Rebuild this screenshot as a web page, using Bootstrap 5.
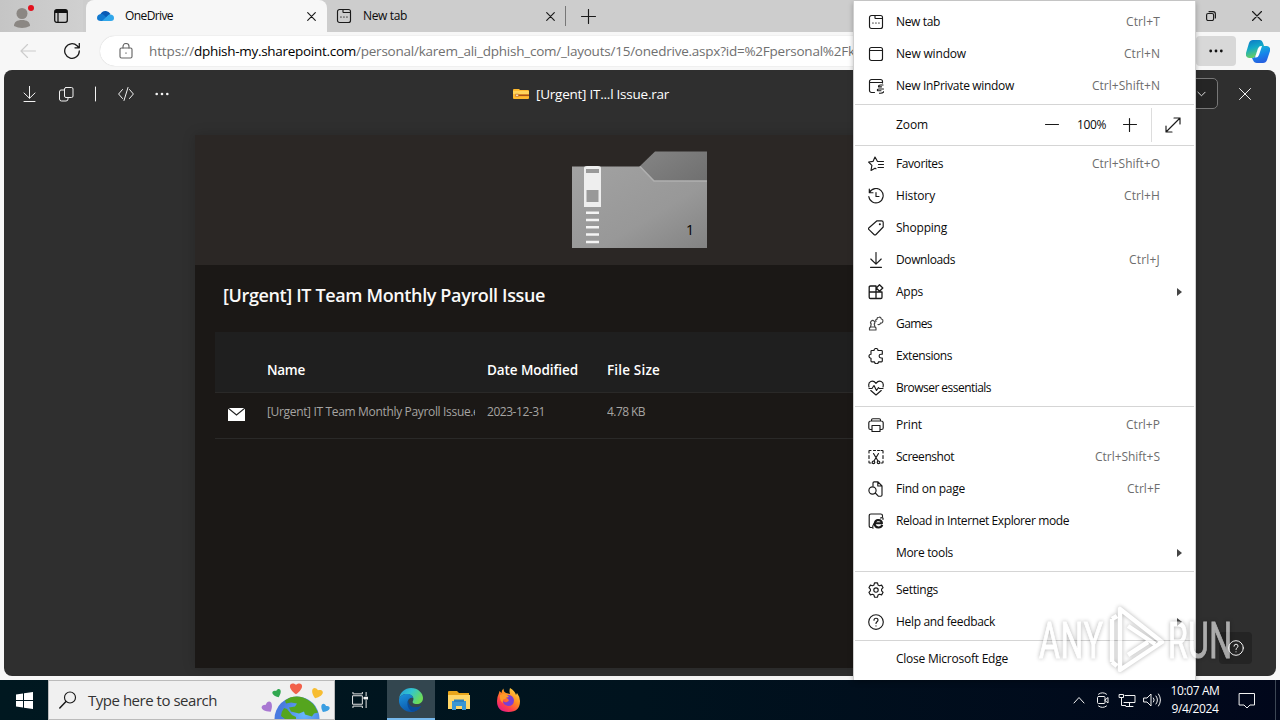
<!DOCTYPE html>
<html lang="en">
<head>
    <meta charset="UTF-8">
    <meta name="viewport" content="width=device-width, initial-scale=1.0">
    <title>OneDrive</title>
    <link href="https://cdn.jsdelivr.net/npm/bootstrap@5.3.0/dist/css/bootstrap.min.css" rel="stylesheet">
    <style>
        body {
            width: 1280px;
            height: 720px;
            font-family: "Open Sans", "Noto Sans", sans-serif;
            font-size: 12px;
            line-height: 16px;
            color: #0a0a0a;
            background: #f7f7f7;
        }
        svg { flex: none; display: block; }
        .ico { width: 16px; height: 16px; fill: none; stroke: #1a1a1a; stroke-width: 1.15; stroke-linecap: round; stroke-linejoin: round; }
        .ico.light { stroke: #f2f2f2; stroke-width: 1; }
        .fit { white-space: nowrap; }

        /* icon sizes and gaps */
        .x-tab { width: 9px; height: 9px; }
        .x-win { width: 10px; height: 10px; margin-right: 18px; }
        .restore { width: 10px; height: 10px; margin-right: 36px; }
        .plus { width: 15px; height: 15px; }
        .back { stroke: #ccc; margin-left: 20px; }
        .reload { margin-left: 28px; }
        .lock { stroke: #666; margin-right: 15px; }

        /* browser chrome */
        .tab-strip { height: 32px; background: #cdcdcd; }
        .profile { width: 83px; padding-left: 10px; background: linear-gradient(90deg, #c5c5c5, #d0d0d0); }
        .tab { height: 32px; padding: 0 11px 0 11px; }
        .tab.current { width: 241px; margin-left: 3px; background: #f7f7f7; border-radius: 8px 8px 0 0; }
        .tab.other { width: 238px; padding-left: 9px; padding-right: 10px; }
        .tab-label { margin-left: 11px; }
        .tab-divider { width: 1px; height: 20px; background: #777; }
        .plus { margin-left: 15px; }
        .toolbar { height: 38px; }
        .address { height: 30px; border-radius: 15px; margin-left: 20px; width: 1080px; background: #fff; box-shadow: 0 0 1px #bbb; font-size: 13.5px; color: #707070; padding-left: 18px; }
        .more-btn { width: 40px; height: 30px; background: #d8d8d8; border-radius: 4px; left: 1196px; }
        .copilot { margin-right: 10px; }

        /* viewer */
        .viewer { height: 606px; margin: 0 4px 4px; background: #2f2f2f; border-radius: 8px; }
        .command-bar { height: 47px; color: #fff; font-size: 13.5px; }
        .commands { width: 509px; padding-left: 17px; gap: 21px; }
        .commands .bar { width: 2px; }
        .doc-name { margin-left: 7px; }
        .split-btn { width: 60px; height: 31px; border: 1px solid #777; border-radius: 5px; background: #252525; padding-right: 11px; margin-right: 21px; }
        .chev { width: 9px; height: 6px; }
        .close-doc { width: 12px; height: 12px; margin-right: 25px; }
        .sheet { width: 890px; height: 533px; margin: 18px 0 0 191px; background: #1b1816; color: #fff; box-shadow: 0 0 12px rgba(0,0,0,.18); }
        .sheet-top { height: 130px; background: #2b2725; padding: 16px 0 0 377px; }
        .sheet-title { font-size: 18px; font-weight: 600; line-height: 24px; padding: 18px 0 0 28px; height: 67px; color: #faf9f8; }
        .files { margin: 0 20px; display: grid; grid-template-columns: 52px 208px 12px 120px 1fr; }
        .files > div { border-bottom: 1px solid #2a2928; }
        .files .th { height: 61px; padding-top: 30px; background: #1f1f1f; font-size: 13.5px; font-weight: 600; }
        .files .td { height: 46px; padding-top: 11px; color: #a6a4a2; overflow: hidden; }
        .mail { margin: 4px 0 0 13px; }
        .folder { width: 135px; height: 98px; }

        /* app menu */
        .app-menu { position: absolute; left: 853px; top: 1px; width: 343px; height: 679px; padding-top: 5px; background: #fff; border: 1px solid #cfcfcf; border-width: 0 1px; box-shadow: 0 2px 5px rgba(0,0,0,.25); }
        .entry { height: 32px; padding: 0 35px 0 14px; position: relative; }
        .entry .ico { margin-right: 12px; }
        .entry .keys { color: #6d6d6d; margin-left: auto; }
        .entry .arrow { position: absolute; right: 13px; border: 4px solid transparent; border-left: 5px solid #444; border-right: 0; }
        .sep { height: 5px; padding: 2px 1px; }
        .sep::before { content: ""; display: block; height: 1px; background: #d5d5d5; }
        .zoom-row { height: 36px; padding-left: 42px; }
        .zoom-row .step { width: 14px; }
        .zoom-row .minus { margin: 0 18px 0 117px; }
        .zoom-row .add { margin: 0 14px 0 17px; }
        .zoom-row .full { height: 34px; border-left: 1px solid #ddd; padding-left: 13px; }

        .help-btn { position: absolute; left: 1219px; top: 632px; width: 33px; height: 32px; background: #242424; border-radius: 4px; }
        .watermark { position: absolute; left: 1039px; top: 605px; width: 196px; height: 72px; opacity: .6; filter: drop-shadow(0 0 2px rgba(0,0,0,.5)); }
        .watermark text { font: 400 50px Roboto, sans-serif; fill: #fff; stroke: #fff; }

        /* taskbar */
        .taskbar { height: 40px; background: linear-gradient(90deg, #001820, #00131e 50%, #01071b); color: #fff; }
        .search { width: 287px; height: 40px; background: #f0f0f0; border: 1px solid #bbb; color: #333; font-size: 15px; padding: 0 1px 0 10px; }
        .glass { width: 18px; height: 18px; margin-right: 11px; }
        .task { width: 48px; height: 40px; }
        .task.first { width: 52px; padding-right: 3px; }
        .task.last { width: 50px; }
        .task.open { background: #33464f; border-bottom: 2px solid #76b9ed; padding-top: 2px; }
        .tray { gap: 7px; }
        .tray .up { width: 12px; height: 8px; margin-right: 3px; }
        .tray .wide { width: 18px; }
        .clock { width: 60px; line-height: 18px; font-size: 12px; margin-left: -3px; }
        .note { width: 18px; height: 17px; margin: 0 12px 0 6px; }
        .peek { width: 5px; height: 40px; border-left: 1px solid #3c4654; }
    </style>
</head>
<body class="overflow-hidden position-relative">
    <div class="tab-strip d-flex align-items-center">
        <div class="profile d-flex align-items-center h-100">
            <svg width="28" height="28" viewBox="0 0 28 28">
                <circle cx="12" cy="11.5" r="5.5" fill="#8b8783"/>
                <path d="M4 24c0-4 3-6 8-6s8 2 8 6q-8 4-16 0" fill="#8b8783"/>
                <circle cx="21" cy="6" r="3" fill="#e3101d"/>
            </svg>
            <svg class="ms-3" width="14" height="14" viewBox="0 0 14 14" fill="none" stroke="#111" stroke-width="1.3"><rect x=".7" y=".7" width="12.6" height="12.6" rx="2"/><path d="M1 2.500h12" stroke-width="3"/><path d="M4 2v11"/></svg>
        </div>
        <div class="tab current d-flex align-items-center">
            <svg width="17" height="12" viewBox="0 0 17 12">
                <path d="M3 5Q5 .5 9 1q3 .5 4.500 3L9 8H1z" fill="#0a5bb5"/>
                <path d="M0 8q0-4 5-4 2 0 7 7H4Q0 11 0 8" fill="#1279cf"/>
                <path d="M5 11l7-6.500Q17 4 17 8q0 3-3 3z" fill="#31a7ea"/>
            </svg>
            <span class="fit tab-label" data-w="48">OneDrive</span>
            <svg class="ico x-tab ms-auto" viewBox="0 0 9 9"><path d="M.7.7l7.600 7.600M8.300.7L.7 8.300"/></svg>
        </div>
        <div class="tab other d-flex align-items-center">
            <svg class="ico"><use href="#i-tab"/></svg>
            <span class="fit tab-label" data-w="44">New tab</span>
            <svg class="ico x-tab ms-auto" viewBox="0 0 9 9"><path d="M.7.7l7.600 7.600M8.300.7L.7 8.300"/></svg>
        </div>
        <div class="tab-divider"></div>
        <svg class="ico plus" viewBox="0 0 15 15"><path d="M7.500.5v14M.5 7.500h14"/></svg>
        <svg class="ico restore ms-auto" viewBox="0 0 10 10"><rect x=".6" y="2.500" width="7" height="7" rx="1.500"/><path d="M3 .6h4q2.400 0 2.400 2.400v4"/></svg>
        <svg class="ico x-win" viewBox="0 0 10 10"><path d="M.5.5l9 9M9.500.5l-9 9"/></svg>
    </div>

    <div class="toolbar d-flex align-items-center">
        <svg class="ico back" viewBox="0 0 16 16"><path d="M15.500 8H1M7.500 1.500L1 8l6.500 6.500"/></svg>
        <svg class="ico reload" viewBox="0 0 16 16"><path d="M15.300 8a7.300 7.300 0 1 1-2.200-5.200L15 4.700M15.300.5v4.300h-4.300" stroke-width="1.300"/></svg>
        <div class="address d-flex align-items-center overflow-hidden">
            <svg class="ico lock" viewBox="0 0 16 16"><rect x="2" y="5" width="12" height="10" rx="1.500"/><path d="M5 5V3.500a3 3 0 0 1 6 0V5M8 9.800v.5"/></svg>
            <span class="fit" data-w="45">https://</span><span class="fit text-black" data-w="162">dphish-my.sharepoint.com</span><span class="fit" data-w="492">/personal/karem_ali_dphish_com/_layouts/15/onedrive.aspx?id=%2Fpersonal%2F</span><span class="fit">karem</span>
        </div>
        <div class="more-btn position-absolute d-flex align-items-center justify-content-center">
            <svg width="14" height="4" viewBox="0 0 14 4" fill="#111"><circle cx="1.700" cy="2" r="1.400"/><circle cx="7" cy="2" r="1.400"/><circle cx="12.300" cy="2" r="1.400"/></svg>
        </div>
        <svg class="copilot ms-auto" width="24" height="23" viewBox="0 0 24 23">
            <defs>
                <linearGradient id="cpA" x2="0.300" y2="1"><stop stop-color="#0c74c6"/><stop offset=".5" stop-color="#12a9c8"/><stop offset="1" stop-color="#69cf62"/></linearGradient>
                <linearGradient id="cpB" x2="0.300" y2="1"><stop stop-color="#19bfd0"/><stop offset=".6" stop-color="#1684ea"/><stop offset="1" stop-color="#2562e0"/></linearGradient>
            </defs>
            <path d="M7 0h7q2 0 3 3l1 3h-3q-2 0-3 3l-2 6q-1 3-3 3H3q-4-1-3-5L3 3q1-3 4-3" fill="url(#cpA)"/>
            <path d="M18 6h3q4 1 3 5l-3 9q-1 3-4 3h-6q-3 0-4-3l-1-2q3 0 4-3l2-6q1-3 3-3z" fill="url(#cpB)"/>
            <path d="M12 8.500q1-2.500 3-2.500h1l-3 9q-1 2.500-3 2.500H9z" fill="#fff"/>
        </svg>
    </div>

    <div class="viewer">
        <div class="command-bar d-flex align-items-center">
            <div class="commands d-flex align-items-center">
                <svg class="ico light" viewBox="0 0 16 16"><path d="M8.500 0v12M3 7l5.500 5.300L14 7M3 15.500h11"/></svg>
                <svg class="ico light" viewBox="0 0 16 16"><rect x="6.500" y="1.500" width="8.500" height="10" rx="1.500"/><path d="M6 4H3Q1.500 4 1.500 6v7q0 2 2 2H8q2 0 2-2v-1.500"/></svg>
                <svg class="ico light bar" viewBox="0 0 2 16"><path d="M.5 1v14"/></svg>
                <svg class="ico light" viewBox="0 0 16 16"><path d="M4.500 3.500L.6 8l3.900 4.500M11.500 3.500L15.400 8l-3.900 4.500M10 1.500l-4 13"/></svg>
                <svg width="14" height="4" viewBox="0 0 14 4" fill="#f4f4f4"><circle cx="1.700" cy="2" r="1.300"/><circle cx="7" cy="2" r="1.300"/><circle cx="12.300" cy="2" r="1.300"/></svg>
            </div>
            <svg width="16" height="12" viewBox="0 0 16 12">
                <path d="M0 2q0-1 1-1h5l1 1h8q1 0 1 1v7q0 1-1 1H1q-1 0-1-1z" fill="#ffb92e"/><path d="M0 3h16v3H0z" fill="#ffd45b"/>
                <path d="M5 6.500h11v1.600H5z" fill="#a6511a"/><path d="M2.500 6.200h3v2.200h-3z" fill="#f2e2cc" stroke="#c67a2a" stroke-width=".8"/>
            </svg>
            <span class="fit doc-name" data-w="133">[Urgent] IT...l Issue.rar</span>
            <div class="split-btn ms-auto d-flex align-items-center justify-content-end">
                <svg class="ico light chev" viewBox="0 0 10 6"><path d="M1 1l4 4 4-4"/></svg>
            </div>
            <svg class="ico light close-doc" viewBox="0 0 12 12"><path d="M.5.5l11 11M11.500.5l-11 11"/></svg>
        </div>

        <div class="sheet">
            <div class="sheet-top">
                <svg class="folder" viewBox="0 0 135 98">
                    <defs>
                        <linearGradient id="fBody" x2="1" y2="1"><stop stop-color="#a2a2a2"/><stop offset=".6" stop-color="#989898"/><stop offset="1" stop-color="#838383"/></linearGradient>
                        <linearGradient id="fBack" x2="1" y2="1"><stop stop-color="#858585"/><stop offset="1" stop-color="#6b6b6b"/></linearGradient>
                    </defs>
                    <path d="M67 16L83 .5h52V45H67z" fill="url(#fBack)"/>
                    <path d="M0 15.500h68L82 30h53v67H0z" fill="url(#fBody)"/>
                    <path d="M68 15.500L82 30h53" fill="none" stroke="#b0b0b0" stroke-width="1.500"/>
                    <path d="M12 17q0-2 3-2h11q3 0 3 2v39H12z" fill="#eee"/>
                    <path d="M14 18h13v4H14zM14.500 39h12v12h-12z" fill="#999"/>
                    <path d="M14 61.800h13M14 69h13M14 76.300h13M14 83.500h13M14 91h13" stroke="#f4f4f4" stroke-width="2.500"/>
                    <text x="114" y="84" font-size="14" fill="#000">1</text>
                </svg>
            </div>
            <div class="sheet-title"><span class="fit" data-w="322">[Urgent] IT Team Monthly Payroll Issue</span></div>
            <div class="files">
                <div class="th"></div>
                <div class="th"><span class="fit" data-w="38">Name</span></div>
                <div class="th"></div>
                <div class="th"><span class="fit" data-w="91">Date Modified</span></div>
                <div class="th"><span class="fit" data-w="53">File Size</span></div>
                <div class="td"><svg class="mail" width="17" height="13" viewBox="0 0 17 13"><path d="M0 0h17v13H0z" fill="#fff"/><path d="M0 0l8.500 7L17 0" fill="none" stroke="#222" stroke-width="1.200"/></svg></div>
                <div class="td"><span class="fit" data-w="226">[Urgent] IT Team Monthly Payroll Issue.eml</span></div>
                <div class="td"></div>
                <div class="td"><span class="fit" data-w="58">2023-12-31</span></div>
                <div class="td"><span class="fit" data-w="38">4.78 KB</span></div>
            </div>
        </div>
    </div>

    <div class="taskbar d-flex align-items-center">
        <div class="task d-flex align-items-center justify-content-center">
            <svg width="17" height="17" viewBox="0 0 17 17" fill="#fff"><path d="M0 2.500L7 1.500V8H0zM8 1.300L17 0v8H8zM0 9h7v6.500l-7-1zM8 9h9v8l-9-1.300z"/></svg>
        </div>
        <div class="search d-flex align-items-center overflow-hidden">
            <svg class="ico glass" viewBox="0 0 18 18"><circle cx="11" cy="6.500" r="5.500"/><path d="M7 10.500L.8 17" stroke-width="1.500"/></svg>
            <span class="fit" data-w="129">Type here to search</span>
            <svg class="ms-auto" width="72" height="38" viewBox="0 0 72 38">
                <defs>
                    <radialGradient id="globe" cx=".65" cy=".4"><stop stop-color="#68b7ff"/><stop offset="1" stop-color="#4a7be0"/></radialGradient>
                    <path id="heart" d="M0 6C-10-1-5-7 0-3 5-7 10-1 0 6"/>
                </defs>
                <circle cx="36" cy="38" r="22.500" fill="url(#globe)"/>
                <path d="M29 16.500q7-2 13 0 8 3 12 9l3 6-4 1-2 3-7-2-1-3-5 2-8-2-2-4 6-1 2-3-6-1-5 1-1-3zM23 27l3 1 5 6 4 2v2H24l-4-3q0-4 3-8" fill="#55a51e"/>
                <use href="#heart" transform="translate(35 7) scale(1.050)" fill="#f2614b"/>
                <use href="#heart" transform="translate(16 12) rotate(-22) scale(.75)" fill="#31a850"/>
                <use href="#heart" transform="translate(56 12) rotate(20) scale(.95)" fill="#f7bd31"/>
                <use href="#heart" transform="translate(6.500 26) rotate(-35) scale(.95)" fill="#a978d2"/>
                <use href="#heart" transform="translate(64 27) rotate(28) scale(.75)" fill="#3a9ee2"/>
            </svg>
        </div>
        <div class="task first d-flex align-items-center justify-content-center">
            <svg class="ico light" viewBox="0 0 17 17"><path d="M1 4h10v9H1zM1 0v2h10V0M1 17v-2h10v2M15 0v4M15 9v8"/><path d="M13.500 6.500h3" stroke-width="3"/></svg>
        </div>
        <div class="task open d-flex align-items-center justify-content-center">
            <svg width="24" height="24" viewBox="0 0 24 24">
                <defs>
                    <linearGradient id="eA" x2="1" y2=".5"><stop stop-color="#2597d8"/><stop offset=".5" stop-color="#32c5cf"/><stop offset="1" stop-color="#6cdc58"/></linearGradient>
                    <linearGradient id="eB" x2="0.500" y2="1"><stop stop-color="#1c93dc"/><stop offset="1" stop-color="#0b55a8"/></linearGradient>
                </defs>
                <path d="M0 11C1 4 6 0 12 0c7 0 12 5 12 10 0 4-3 6-6 6-4 0-5-1.500-4-3 2-4-2-7-6-7-4 0-7 2-8 5" fill="url(#eA)"/>
                <path d="M0 11c1-3 4-5 8-5 4 0 6 2 6 4-3-1-6 2-5 5 1 5 7 6 13 3C18 24 13 24 12 24 5 24-1 18 0 11" fill="url(#eB)"/>
                <path d="M9.500 11C7 16 9 22 14 23.800 18 23 21 21 22 18c-6 3-14 1-12.500-7" fill="#0a4b98"/>
            </svg>
        </div>
        <div class="task d-flex align-items-center justify-content-center">
            <svg width="22" height="19" viewBox="0 0 22 19">
                <path d="M0 1q0-1 1-1h8l2 2h10v3H0z" fill="#e8a51a"/><path d="M0 4h22v14H0z" fill="#ffd667"/>
                <path d="M4 10h14v9h-4v-4H8v4H4z" fill="#3a96d2"/><path d="M6 8.500h10V11H6z" fill="#2d80bd"/>
            </svg>
        </div>
        <div class="task last d-flex align-items-center justify-content-center">
            <svg width="23" height="24" viewBox="0 0 23 24">
                <defs><linearGradient id="fx" x1=".9" x2=".2" y2="1"><stop stop-color="#ffe14a"/><stop offset=".45" stop-color="#ff8a1f"/><stop offset=".75" stop-color="#ff3d4d"/><stop offset="1" stop-color="#e3198c"/></linearGradient></defs>
                <path d="M13 0q5 3 6 7l1-2q3 4 3 8 0 11-11.500 11T0 13q0-4 2-8l.5-2 2 2q0-3 2-4.500Q6.500 4 9 5l4 1q-1-3 0-6" fill="url(#fx)"/>
                <path d="M7 8l4-1q5 0 6 5 0 6-6 6-5-1-5-5 2 2 4 1 3-1 1-3z" fill="#7a3fd4"/><path d="M3 7q4-2 7 0l2 2q-3 0-4 2-3 0-2 4-4-3-3-8" fill="#ff9b28"/>
            </svg>
        </div>

        <div class="tray d-flex align-items-center ms-auto">
            <svg class="ico light up" viewBox="0 0 12 8"><path d="M1 7l5-5.500L11 7"/></svg>
            <svg class="ico light" viewBox="0 0 16 16"><rect x="2.500" y="4.500" width="7.500" height="7" rx="1"/><path d="M10 8l3-2.500v5.500l-3-2.500M3.500 2.200q4-3 8 0M3.500 14q4 3 8 0"/></svg>
            <svg class="ico light wide" viewBox="0 0 18 16"><path d="M7 3.500h10v7H6M11.500 11v3.500M8 14.500h7M1.500 2.500h4v3h-4zM3.500 5.500v8h4"/></svg>
            <svg class="ico light wide" viewBox="0 0 18 16"><path d="M1 6h3l4-4v12l-4-4H1zM10.500 6q1.500 2 0 4M13 4q3 4 0 8M15.500 2q4 6 0 12"/></svg>
            <div class="clock d-flex flex-column align-items-center">
                <span class="fit" data-w="49">10:07 AM</span>
                <span class="fit" data-w="47">9/4/2024</span>
            </div>
            <svg class="ico light note" viewBox="0 0 18 17"><path d="M1.500 1.500h15v11.500H12l-3 3-3-3H1.500z"/></svg>
            <div class="peek"></div>
        </div>
    </div>

    <div class="help-btn d-flex align-items-center justify-content-center"><svg class="ico light"><use href="#i-help"/></svg></div>

    <div class="app-menu" id="appMenu"></div>

    <svg class="watermark" viewBox="0 0 196 72">
        <text transform="translate(0 53) scale(.64 1)" textLength="100">ANY</text>
        <path d="M73 14v43M73 14l5-3M73 57l5 4M81 4v61l42-28zM89 21l27 18M89 50l20-13" fill="none" stroke="#fff" stroke-width="4.500" stroke-linejoin="round"/>
        <text transform="translate(129 53) scale(.64 1)" textLength="100">RUN</text>
    </svg>

    <!-- icon sprite, all on a 16x16 grid -->
    <svg width="0" height="0" class="position-absolute">
        <symbol id="i-tab" viewBox="0 0 16 16"><path d="M3.500 1.500h9a2 2 0 0 1 2 2v9a2 2 0 0 1-2 2h-9a2 2 0 0 1-2-2v-9a2 2 0 0 1 2-2M7 1.500V4q0 .5.500.5h7M4.700 9h.5M7.700 9h.5M10.700 9h.5"/></symbol>
        <symbol id="i-window" viewBox="0 0 16 16"><rect x="1.500" y="1.500" width="13" height="13" rx="2"/><path d="M1.500 4.500h13"/></symbol>
        <symbol id="i-private" viewBox="0 0 16 16"><path d="M6.500 14.500H3.500a2 2 0 0 1-2-2v-9a2 2 0 0 1 2-2h9a2 2 0 0 1 2 2V5M1.500 4.500h13M15 7h-2.500q-2 0-2 1.800h3M15.500 11H11q-2 0-1.500 1.700h3.500M16 13.500q-1 2-4.500 1.700"/></symbol>
        <symbol id="i-star" viewBox="0 0 16 16"><path d="M9.500 5.500L7 1 5 5.400.6 6l3.300 3.300L3 14.500l4-2.300 1 .6M10 5.500h5.500M10.500 8.500h5M10 11.500h5.500"/></symbol>
        <symbol id="i-history" viewBox="0 0 16 16"><path d="M1.500 4.500A7.200 7.200 0 1 1 .8 8.500M1.300 1v3.700H5M8 4.500v4h3"/></symbol>
        <symbol id="i-tag" viewBox="0 0 16 16"><path d="M9 .8h4.500q1.700 0 1.700 1.700V7L8 14.500q-1 1-2 0L1 9.700q-1-1 0-2z"/><path d="M11.800 4.200h.1" stroke-width="2"/></symbol>
        <symbol id="i-down" viewBox="0 0 16 16"><path d="M8 .5v11.500M2.800 7L8 12.200 13.200 7M2.500 15.300h11"/></symbol>
        <symbol id="i-apps" viewBox="0 0 16 16"><path d="M8 4V2H2.500Q1.200 2 1.200 3.200v10Q1.200 14.500 2.500 14.500h10.300q1.200 0 1.200-1.300V8H1.200M8 4v10.500M11.500.8L14.800 4l-3.300 3.300L8.300 4z" stroke-width="1.300"/></symbol>
        <symbol id="i-games" viewBox="0 0 16 16"><path d="M3.200 8a2.100 2.100 0 1 1 3 0l.8 3 1 1v2H1.500v-2l1-1zM2.500 11H7M8 5.500q-1-2 1-2.300 0-2 2-2 2-.2 2.300 1.800 2 .4 1.500 2.500-.5 2-2.300 1.500Q12 9 10 8.500" stroke="#444"/></symbol>
        <symbol id="i-puzzle" viewBox="0 0 16 16"><path d="M6 2.500a2 2 0 0 1 4 0h3.500q.8 0 .8.800V6.200h-1.300a1.900 1.900 0 0 0 0 3.800h1.300v3q0 .8-.8.800H10.500a2 2 0 0 1-4 0H3.800q-.8 0-.8-.8v-2.800a2 2 0 0 1 0-4V3.300q0-.8.8-.8z"/></symbol>
        <symbol id="i-heart" viewBox="0 0 16 16"><path d="M1 7C-.5 1 5-.5 8 3.300 11-.5 16.500 1 15 7M2.800 10.500L8 15l5.200-4.500M1 8.500h3l2-3 2.500 5 2-3 .8 1H15"/></symbol>
        <symbol id="i-print" viewBox="0 0 16 16"><path d="M4 12.500H2.500Q.8 12.500.8 11V6Q.8 4 3 4h10q2.200 0 2.200 2v5q0 1.500-1.700 1.500H12M3.500 4V3q0-1.300 1.300-1.300h6.400q1.300 0 1.300 1.300v1M4 8.500h8v6H4z"/></symbol>
        <symbol id="i-shot" viewBox="0 0 16 16"><path d="M1 4V2q0-.5.500-.5H3M5.500 1.500h2M9.500 1.500h2M13 1.500h1.500q.5 0 .5.500v2M1 6.500v3M15 6.500v3M1 12v1.500q0 .5.500.5H3M15 12v1.500q0 .5-.5.500H13M5.500 4.500L10 12M10.500 4.500L6 12"/><circle cx="5.500" cy="13.300" r="1.300"/><circle cx="10.500" cy="13.300" r="1.300"/></symbol>
        <symbol id="i-find" viewBox="0 0 16 16"><path d="M5 5V2Q5 .8 6.200.8H10L14 5v9q0 1.200-1.200 1.200H11M9.800 1v4h4M7.300 12l3 3.200"/><circle cx="4.500" cy="9.500" r="3.600"/></symbol>
        <symbol id="i-ie" viewBox="0 0 16 16"><path d="M4 14.500H3q-1.800 0-1.800-1.800v-10Q1.200 1 3 1h9.700q1.800 0 1.800 1.800V3.500"/><path d="M14.300 11.800q-1 2.700-4 2.600-3.500-.2-3.600-3.800.2-3.600 3.700-3.700 3.400.2 3.600 3.300H7.500" stroke-width="2" stroke-linecap="butt"/><path d="M5 15.300Q3.500 12 10 6.500M12.500 5q3-1.300 2.500 1.500"/></symbol>
        <symbol id="i-gear" viewBox="0 0 16 16"><circle cx="8" cy="8" r="2.200"/><path d="M6.500.8h3l.5 2.100 1.500.8 2.100-.6 1.500 2.600L13.600 7.200v1.600l1.500 1.500-1.500 2.600-2.100-.6-1.500.8-.5 2.100h-3L6 13.100l-1.500-.8-2.100.6L.9 10.300l1.500-1.500V7.200L.9 5.700l1.500-2.600 2.100.6L6 2.900z"/></symbol>
        <symbol id="i-help" viewBox="0 0 16 16"><circle cx="8" cy="8" r="7.300"/><path d="M6 6.200q0-2 2-2t2 1.900q0 1-1 1.700-1 .8-1 1.700M8 11.800v.1"/></symbol>
    </svg>

    <script>
        // [icon, label, label width, shortcut, shortcut width]; null is a separator
        const entries = [
            ["tab", "New tab", 44, "Ctrl+T", 34],
            ["window", "New window", 70, "Ctrl+N", 36],
            ["private", "New InPrivate window", 118, "Ctrl+Shift+N", 68],
            null,
            "zoom",
            null,
            ["star", "Favorites", 47, "Ctrl+Shift+O", 68],
            ["history", "History", 39, "Ctrl+H", 36],
            ["tag", "Shopping", 51],
            ["down", "Downloads", 59, "Ctrl+J", 31],
            ["apps", "Apps", 27, ">"],
            ["games", "Games", 36],
            ["puzzle", "Extensions", 56],
            ["heart", "Browser essentials", 95],
            null,
            ["print", "Print", 26, "Ctrl+P", 34],
            ["shot", "Screenshot", 58, "Ctrl+Shift+S", 65],
            ["find", "Find on page", 69, "Ctrl+F", 33],
            ["ie", "Reload in Internet Explorer mode", 173],
            ["", "More tools", 57, ">"],
            null,
            ["gear", "Settings", 42],
            ["help", "Help and feedback", 99, ">"],
            null,
            ["", "Close Microsoft Edge", 112]
        ];

        const zoomRow = `
            <div class="zoom-row d-flex align-items-center">
                <span class="fit" data-w="32">Zoom</span>
                <svg class="ico step minus" viewBox="0 0 14 16"><path d="M.5 7.500h13"/></svg>
                <span class="fit" data-w="29">100%</span>
                <svg class="ico step add" viewBox="0 0 14 16"><path d="M.5 7.500h13M6.500 1.500v13"/></svg>
                <div class="full d-flex align-items-center">
                    <svg class="ico" viewBox="0 0 16 16"><path d="M1 15L15 1M9 1h6v6M1 9v6h6"/></svg>
                </div>
            </div>`;

        document.getElementById("appMenu").innerHTML = entries.map(e => {
            if (!e) return '<div class="sep"></div>';
            if (e === "zoom") return zoomRow;
            const [icon, label, w, keys, kw] = e;
            let right = "";
            if (keys === ">") right = '<span class="arrow"></span>';
            else if (keys) right = `<span class="keys fit" data-w="${kw}">${keys}</span>`;
            return `<div class="entry d-flex align-items-center">
                <svg class="ico">${icon ? `<use href="#i-${icon}"/>` : ""}</svg>
                <span class="fit" data-w="${w}">${label}</span>${right}</div>`;
        }).join("");

        // tighten or loosen each label to its set width
        document.querySelectorAll(".fit[data-w]").forEach(el => {
            const gap = el.dataset.w - el.getBoundingClientRect().width;
            el.style.letterSpacing = (gap / el.textContent.length) + "px";
        });
    </script>

    <script src="https://cdn.jsdelivr.net/npm/bootstrap@5.3.0/dist/js/bootstrap.bundle.min.js"></script>
</body>
</html>
